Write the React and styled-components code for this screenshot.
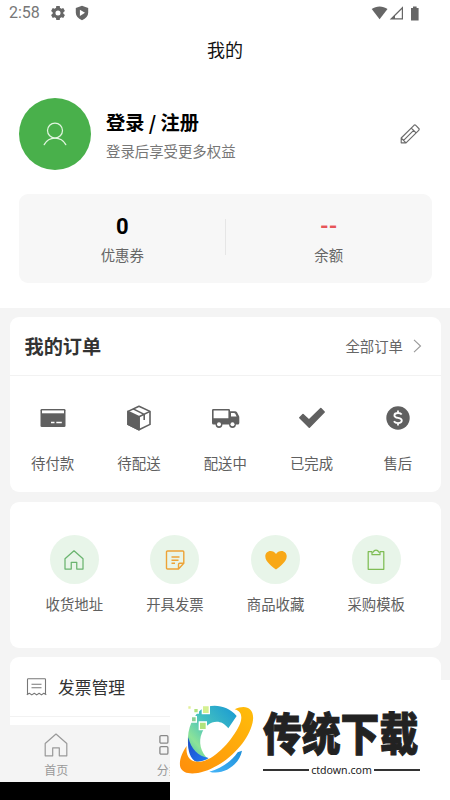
import React from "react";
import styled, { createGlobalStyle } from "styled-components";

const GlobalStyle = createGlobalStyle`
  * { box-sizing: border-box; }
  body {
    margin: 0;
    background: #fff;
    font-family: "Noto Sans CJK SC", "Noto Sans", sans-serif;
    color: #606060;
  }
  svg { display: block; flex: none; }
`;

const Screen = styled.div`
  position: relative;
  width: 450px;
  height: 800px;
  overflow: hidden;
  display: flex;
  flex-direction: column;
  background: #f4f4f4;
`;

const Top = styled.header`
  height: 308px;
  flex: none;
  background: #fff;
`;

const StatusBar = styled.div`
  height: 27px;
  display: flex;
  align-items: center;
  justify-content: space-between;
  padding: 0 30px 1px 9px;
  font: 16px/26px Roboto, sans-serif;
  color: #777;
`;

const StatusGroup = styled.div`
  display: flex;
  align-items: center;
  gap: ${(p) => p.$gap}px;
`;

const Title = styled.h1`
  margin: 0;
  height: 44px;
  font-size: 18px;
  font-weight: 400;
  line-height: 44px;
  text-align: center;
  color: #111;
`;

const Profile = styled.section`
  display: flex;
  align-items: center;
  height: 72px;
  margin: 27px 30px 0 19px;
`;

const Avatar = styled.div`
  display: flex;
  align-items: center;
  justify-content: center;
  width: 72px;
  height: 72px;
  border-radius: 50%;
  background: #49b04b;
`;

const ProfileText = styled.div`
  flex: 1;
  margin-left: 15px;
  padding-top: 2px;
`;

const LoginText = styled.div`
  font-size: 19.2px;
  font-weight: 700;
  line-height: 30px;
  color: #000;
`;

const Hint = styled.div`
  font-size: 14.4px;
  line-height: 27px;
  color: #777;
`;

const Stats = styled.section`
  display: grid;
  grid-template-columns: 1fr 1fr;
  height: 89px;
  margin: 24px 18px 0 19px;
  padding-top: 18px;
  border-radius: 9px;
  background: #f7f7f7;
`;

const Stat = styled.div`
  height: 56px;
  text-align: center;
`;

const StatDivided = styled(Stat)`
  background: linear-gradient(#e6e6e6, #e6e6e6) right 0 top 7px / 1px 36px no-repeat;
`;

const StatValue = styled.div`
  height: 29px;
  font: 700 22px/29px Roboto, sans-serif;
  color: ${(p) => p.$color};
`;

const StatLabel = styled.div`
  font-size: 14.4px;
  line-height: 28px;
  color: #666;
`;

const Body = styled.main`
  flex: 1;
  min-height: 0;
  overflow: hidden;
  display: flex;
  flex-direction: column;
  gap: 9.5px;
  padding: 9px 9px 0 9.5px;
`;

const Card = styled.section`
  flex: none;
  height: ${(p) => p.$height}px;
  border-radius: 9px;
  background: #fff;
`;

const CardHeader = styled.div`
  display: flex;
  align-items: center;
  height: 59px;
  padding: 0 19px 0 15px;
  border-bottom: 1px solid #f2f2f2;
`;

const CardTitle = styled.h2`
  flex: 1;
  margin: 0;
  font-size: 19.2px;
  font-weight: 700;
  line-height: 28px;
  color: #333;
`;

const More = styled.span`
  margin-right: 10px;
  font-size: 14.4px;
  line-height: 24px;
  color: #666;
`;

const OrderGrid = styled.div`
  display: grid;
  grid-template-columns: repeat(5, 1fr);
  padding-top: 26px;
`;

const ToolGrid = styled.div`
  display: grid;
  grid-template-columns: repeat(4, 1fr);
  padding: 33.5px 14.5px 0;
`;

const Item = styled.div`
  display: flex;
  flex-direction: column;
  align-items: center;
`;

const OrderIcon = styled.div`
  display: flex;
  align-items: center;
  justify-content: center;
  height: 32px;
`;

const ToolIcon = styled.div`
  display: flex;
  align-items: center;
  justify-content: center;
  width: 49px;
  height: 49px;
  border-radius: 50%;
  background: #e8f5e9;
`;

const ItemLabel = styled.div`
  margin-top: ${(p) => p.$gap}px;
  font-size: 14.4px;
  line-height: 24px;
  color: #606060;
`;

const MenuRow = styled.div`
  display: flex;
  align-items: center;
  gap: 11px;
  height: 60px;
  padding-left: 16.5px;
  border-bottom: 1px solid #f2f2f2;
  font-size: 16.8px;
  line-height: 26px;
  color: #333;
`;

const TabBar = styled.nav`
  display: flex;
  flex: none;
  height: 57px;
  background: #f4f4f4;
`;

const Tab = styled.div`
  display: flex;
  flex-direction: column;
  align-items: center;
  width: 112.5px;
  padding-top: 8px;
  font-size: 12px;
  line-height: 18px;
  color: #999;
`;

const TabIcon = styled.div`
  height: 28px;
`;

const SystemBar = styled.div`
  flex: none;
  height: 18px;
  background: #000;
`;

const Banner = styled.aside`
  position: absolute;
  right: 0;
  bottom: 0;
  display: flex;
  width: 280px;
  height: 120px;
  padding: 20px 0 0 8px;
  background: #fff;
`;

const BannerText = styled.div`
  width: 157px;
  margin-left: 5px;
  color: #222;
`;

const BannerName = styled.div`
  height: 56px;
  font-size: 38.8px;
  font-weight: 900;
  line-height: 56px;
  white-space: nowrap;
  transform: translateY(3px) scaleY(1.18);
  -webkit-text-stroke: 0.8px #222;
`;

const BannerSite = styled.div`
  display: flex;
  align-items: center;
  gap: 2px;
  height: 20px;
  margin-top: 4px;
  font: 10.6px/20px "Noto Sans", sans-serif;

  &::before,
  &::after {
    content: "";
    flex: 1;
    height: 2px;
    background: #333;
  }
`;

const HouseIcon = ({ size, color, width }) => (
  <svg width={size} height={size} viewBox="0 0 24 24" fill="none" stroke={color} strokeWidth={width} strokeLinejoin="round">
    <path d="M1.2 10.500 12 1l10.800 9.500v12.300h-7.500v-8H8.700v8H1.200Z" />
  </svg>
);

const GearIcon = () => (
  <svg width="16" height="16" viewBox="0 0 24 24" fill="#666">
    <path fillRule="evenodd" d="M20 13.200a8 8 0 0 0 0-2.400l2.400-1.900-2.500-4.300-2.800 1.100a8 8 0 0 0-2.100-1.200L14.600 1.500H9.400L9 4.500a8 8 0 0 0-2.100 1.200L4.100 4.600 1.600 8.900 4 10.800a8 8 0 0 0 0 2.400l-2.400 1.900 2.500 4.300 2.800-1.100A8 8 0 0 0 9 19.500l.4 3h5.200l.4-3a8 8 0 0 0 2.100-1.200l2.800 1.100 2.500-4.300ZM12 8.200a3.800 3.800 0 1 1 0 7.600 3.800 3.800 0 0 1 0-7.600Z" />
  </svg>
);

const ShieldIcon = () => (
  <svg width="14" height="16" viewBox="0 0 14 16" fill="#666">
    <path fillRule="evenodd" d="m7 .7 6.200 2.300v4.800c0 3.300-2.300 5.800-6.200 7.500C3.100 13.600.8 11.100.8 7.800V3ZM4.900 4.700v6.200L10 7.800Z" />
  </svg>
);

const SignalIcons = () => (
  <svg width="49" height="16" viewBox="0 0 49 16" fill="#666">
    <path d="M.7 4.100C5.200.7 12 .7 16.500 4.100L8.600 14.200Z" />
    <path fillRule="evenodd" d="M32 1.300v13.200H18.700ZM30.800 4.200 24 11v2.300h6.800Z" />
    <path d="M40 3.100h2V1.600h3.600v1.500h2v12.300H40Z" />
  </svg>
);

const PersonIcon = () => (
  <svg width="26" height="26" viewBox="0 0 26 26" fill="none" stroke="#e0f5df" strokeWidth="1.25" strokeLinecap="round">
    <circle cx="13" cy="9.500" r="7.500" />
    <path d="M2.200 23.600c2.200-4.100 6-6.500 10.800-6.500s8.600 2.400 10.800 6.500" />
  </svg>
);

const PencilIcon = () => (
  <svg width="20" height="20" viewBox="0 0 20 20" fill="none" stroke="#6b6b6b" strokeWidth="1.15" strokeLinejoin="round">
    <path d="M1.200 18.800V14L14 1.300q.9-.8 1.800.1l3 3.100q.8.900-.1 1.800L6 18.800ZM1.200 14 6 18.800M11.200 4l4.900 4.900M3.600 16.400 13.600 6.400" />
  </svg>
);

const ArrowIcon = () => (
  <svg width="9" height="14" viewBox="0 0 9 14" fill="none" stroke="#999" strokeWidth="1.100">
    <path d="m1 .8 6.500 6.200L1 13.200" />
  </svg>
);

const CardIcon = () => (
  <svg width="26" height="20" viewBox="0 0 26 20">
    <rect x=".5" y="1" width="25" height="18" rx="1.300" fill="#606060" />
    <path d="M2 2.400h22v2.900H2Z" fill="#fff" />
    <path d="M11 14.500h3.500M16.300 14.500h5.500" stroke="#fff" strokeWidth="1.500" />
  </svg>
);

const BoxIcon = () => (
  <svg width="26" height="26" viewBox="0 0 26 26" stroke="#606060" strokeWidth="1.600" strokeLinejoin="round">
    <path d="m13 1.200 11 5.200v13L13 24.800l-11-5.400v-13Z" fill="#fff" />
    <path d="m2 6.400 11 5.400v13L2 19.400Z" fill="#606060" />
    <path d="m13 11.800 11-5.400M7.200 3.900l11 5.500v5.700M13 11.800v13" fill="none" />
  </svg>
);

const TruckIcon = () => (
  <svg width="29" height="21" viewBox="0 0 29 21" fill="#606060">
    <path fillRule="evenodd" d="M2.200 1h15.600q1.200 0 1.200 1.200v1.100h5q1.200 0 2 1l1.700 3.200q.6.800.6 1.700v5.800q0 1.500-1.500 1.500H2.500Q1 16.500 1 15V2.200Q1 1 2.200 1ZM2.600 2.500v7.700h14.800V2.500ZM20 5v3.500h5.600l-1.300-2.700q-.5-.8-1.400-.8Z" />
    <circle cx="8" cy="16.500" r="3.400" />
    <circle cx="21.500" cy="16.500" r="3.400" />
    <circle cx="8" cy="16.300" r="2" fill="#fff" />
    <circle cx="21.500" cy="16.300" r="2" fill="#fff" />
  </svg>
);

const CheckIcon = () => (
  <svg width="28" height="22" viewBox="0 0 28 22" fill="#606060" stroke="#606060" strokeWidth="1.500" strokeLinejoin="round">
    <path d="M5 7.500 11 13 22.800 1.500 26.200 5 11.300 20.300 1.800 10.700Z" />
  </svg>
);

const DollarIcon = () => (
  <svg width="24" height="24" viewBox="0 0 24 24">
    <circle cx="12" cy="12" r="11.700" fill="#606060" />
    <path d="M15.700 8.500c-.7-1-2-1.500-3.700-1.500-2.200 0-3.600.9-3.600 2.400 0 3.600 7.400 1.500 7.400 5.200 0 1.600-1.500 2.500-3.800 2.500-1.900 0-3.300-.6-4.100-1.800M12 4.500V7m0 10v2.500" fill="none" stroke="#fff" strokeWidth="1.800" />
  </svg>
);

const NoteIcon = () => (
  <svg width="20" height="20" viewBox="0 0 20 20" fill="none" stroke="#eda337" strokeWidth="1.400" strokeLinejoin="round">
    <path d="M2.500 1h15.300q1 0 1 1v11.300L13.500 19h-11q-1 0-1-1V2q0-1 1-1ZM13.500 19v-4.500q0-1.200 1.200-1.200h4.100M6.500 7h8M6.500 10.200h7M6.500 13.300h3.500" />
  </svg>
);

const HeartIcon = () => (
  <svg width="22" height="20" viewBox="0 0 22 20" fill="#f8a817">
    <path d="M11 19.500C7.700 16.800.3 12 .3 6.200.3 3.200 2.600.9 5.500.9c2.300 0 4.300 1.100 5.500 3 1.200-1.900 3.200-3 5.500-3 2.900 0 5.200 2.300 5.200 5.300 0 5.800-7.400 10.600-10.700 13.300Z" />
  </svg>
);

const ClipboardIcon = () => (
  <svg width="18" height="22" viewBox="0 0 18 22" fill="none" stroke="#7fbd55" strokeWidth="1.250" strokeLinejoin="round">
    <path d="M5 2.700H1.200v17.600h15.600V2.700H13M5 5.700V3h1.300C6.800 1.700 7.700 1.100 9 1.100s2.200.6 2.700 1.900H13v2.700Z" />
  </svg>
);

const ReceiptIcon = () => (
  <svg width="21" height="18" viewBox="0 0 21 18" fill="none" stroke="#777" strokeWidth="1.100" strokeLinejoin="round">
    <path d="M1.500 16V1.500q0-.7.700-.7h16.600q.7 0 .7.700V16M.8 16.700l2.500-1.500 2.500 1.700 2.500-1.700 2.400 1.700 2.400-1.700 2.400 1.700 2.300-1.700 2.500 1.500M5.500 6.300h10M5.500 9.700h10" />
  </svg>
);

const GridIcon = () => (
  <svg width="22" height="24" viewBox="0 0 22 24" fill="none" stroke="#888" strokeWidth="1.300">
    <rect x="1.900" y="2.600" width="8" height="7.500" rx="1.200" />
    <rect x="13" y="2.600" width="8" height="7.500" rx="1.200" />
    <rect x="1.900" y="13.600" width="8" height="7.500" rx="1.200" />
    <rect x="13" y="13.600" width="8" height="7.500" rx="1.200" />
  </svg>
);

const BrandLogo = () => (
  <svg width="80" height="80" viewBox="24 60 240 240">
    <defs>
      <linearGradient id="brandTeal" x1="1" y1="0" x2="0" y2="1">
        <stop offset="0" stopColor="#1697d5" />
        <stop offset=".45" stopColor="#42bfc1" />
        <stop offset=".75" stopColor="#8ce398" />
        <stop offset="1" stopColor="#36b7b6" />
      </linearGradient>
      <linearGradient id="brandBlue" x1="0" y1="0" x2="1" y2="1">
        <stop offset="0" stopColor="#1b48c8" />
        <stop offset="1" stopColor="#217af3" />
      </linearGradient>
      <linearGradient id="brandGold" x1="0" y1="1" x2="1" y2="0">
        <stop offset="0" stopColor="#ff8e0b" />
        <stop offset="1" stopColor="#ffbd0b" />
      </linearGradient>
      <linearGradient id="brandSky" x1="0" y1="1" x2="1" y2="0">
        <stop offset="0" stopColor="#45b4f8" />
        <stop offset="1" stopColor="#1e8fd8" />
      </linearGradient>
    </defs>
    <path d="M200 108C172 76 125 68 92 90C60 115 48 165 56 205C60 225 68 238 80 245L115 237C92 218 84 185 96 158C108 128 148 108 175 145Z" fill="url(#brandTeal)" />
    <path d="M55 172C62 205 84 230 116 234C102 243 88 247 74 243C56 230 52 200 55 172Z" fill="url(#brandBlue)" />
    <path d="M216 212C208 255 160 287 118 275C155 266 188 240 203 217Z" fill="url(#brandSky)" />
    <path d="M194 88C226 72 253 84 249 120C243 168 198 224 143 256C96 284 42 291 31 262C26 243 36 218 50 198C46 235 65 251 98 244C140 234 188 178 208 136C219 111 215 94 194 88Z" fill="url(#brandGold)" />
    <g stroke="#fff" strokeWidth="4" fill="#b1e37c">
      <path d="M97 77h21v24H97Z" fill="#d5f090" />
      <path d="M88 126h21v23H88Z" />
      <path d="M64 110h15v16H64Z" fill="#8ad095" />
      <path d="M71 85h14v14H71Z" />
      <path d="M53 77h11v11H53Z" fill="#e3ef9b" />
    </g>
  </svg>
);

const orders = [
  ["待付款", CardIcon],
  ["待配送", BoxIcon],
  ["配送中", TruckIcon],
  ["已完成", CheckIcon],
  ["售后", DollarIcon],
];

const tools = [
  ["收货地址", <HouseIcon key="h" size={20} color="#6ab46f" width={1.5} />],
  ["开具发票", <NoteIcon key="n" />],
  ["商品收藏", <HeartIcon key="f" />],
  ["采购模板", <ClipboardIcon key="c" />],
];

export default function App() {
  return (
    <>
      <GlobalStyle />
      <Screen>
        <Top>
          <StatusBar>
            <StatusGroup $gap={10}>
              <span>2:58</span>
              <StatusGroup $gap={9}>
                <GearIcon />
                <ShieldIcon />
              </StatusGroup>
            </StatusGroup>
            <SignalIcons />
          </StatusBar>
          <Title>我的</Title>
          <Profile>
            <Avatar><PersonIcon /></Avatar>
            <ProfileText>
              <LoginText>登录 / 注册</LoginText>
              <Hint>登录后享受更多权益</Hint>
            </ProfileText>
            <PencilIcon />
          </Profile>
          <Stats>
            <StatDivided>
              <StatValue $color="#000">0</StatValue>
              <StatLabel>优惠券</StatLabel>
            </StatDivided>
            <Stat>
              <StatValue $color="#e75458">--</StatValue>
              <StatLabel>余额</StatLabel>
            </Stat>
          </Stats>
        </Top>
        <Body>
          <Card $height={175}>
            <CardHeader>
              <CardTitle>我的订单</CardTitle>
              <More>全部订单</More>
              <ArrowIcon />
            </CardHeader>
            <OrderGrid>
              {orders.map(([label, Icon]) => (
                <Item key={label}>
                  <OrderIcon><Icon /></OrderIcon>
                  <ItemLabel $gap={17}>{label}</ItemLabel>
                </Item>
              ))}
            </OrderGrid>
          </Card>
          <Card $height={146}>
            <ToolGrid>
              {tools.map(([label, icon]) => (
                <Item key={label}>
                  <ToolIcon>{icon}</ToolIcon>
                  <ItemLabel $gap={8}>{label}</ItemLabel>
                </Item>
              ))}
            </ToolGrid>
          </Card>
          <Card $height={120}>
            <MenuRow><ReceiptIcon />发票管理</MenuRow>
          </Card>
        </Body>
        <TabBar>
          <Tab>
            <TabIcon><HouseIcon size={24} color="#999" width={1.2} /></TabIcon>
            首页
          </Tab>
          <Tab>
            <TabIcon><GridIcon /></TabIcon>
            分类
          </Tab>
        </TabBar>
        <SystemBar />
        <Banner>
          <BrandLogo />
          <BannerText>
            <BannerName>传统下载</BannerName>
            <BannerSite>ctdown.com</BannerSite>
          </BannerText>
        </Banner>
      </Screen>
    </>
  );
}
